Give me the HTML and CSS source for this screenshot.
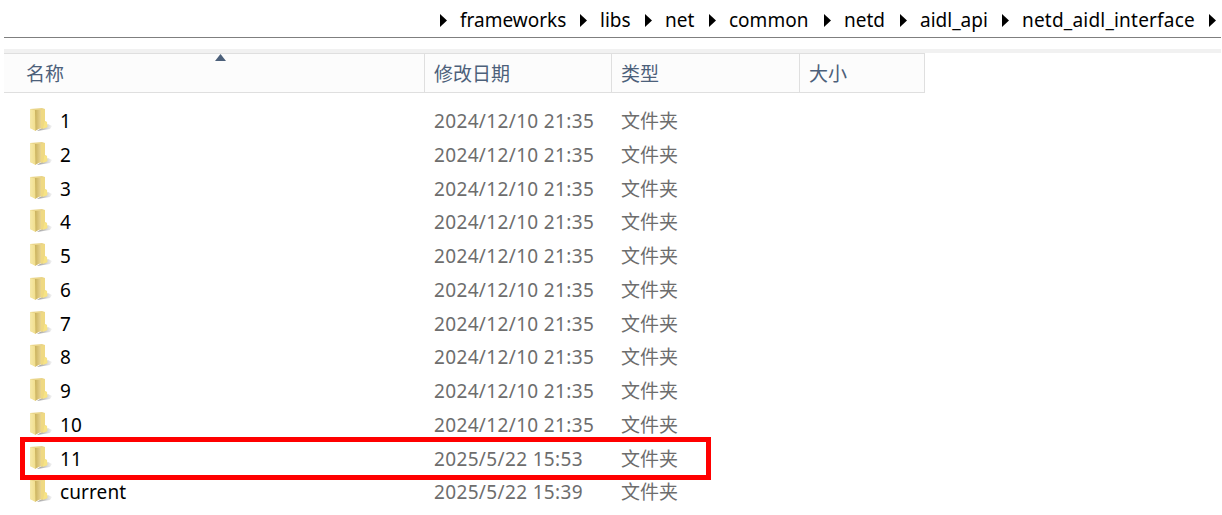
FILE: index.html
```html
<!DOCTYPE html>
<html lang="zh-CN">
<head>
    <meta charset="UTF-8">
    <title>netd_aidl_interface</title>
    <link rel="stylesheet" href="styles.css">
</head>
<body>

    <!-- Folder icon used by every row -->
    <svg class="defs" width="0" height="0">
        <defs>
            <linearGradient id="inside" x1="0" x2="1">
                <stop offset="0" stop-color="#c9b15c"/>
                <stop offset="1" stop-color="#efdb9b"/>
            </linearGradient>
            <linearGradient id="cover" x1="0" x2="1">
                <stop offset="0" stop-color="#f6e9aa"/>
                <stop offset="1" stop-color="#f1de8c"/>
            </linearGradient>
            <linearGradient id="shadow" x1="0" x2="1">
                <stop offset="0" stop-color="#999999"/>
                <stop offset="1" stop-color="#f4f4f4"/>
            </linearGradient>
            <symbol id="folder" viewBox="0 0 24 26">
                <path d="M14 20 L19 17 L23 19 L21 22 L8 24 Z" fill="url(#shadow)"/>
                <path d="M1 2 L13 1 L16 2 L16 20 L6 23 L1 21 Z" fill="#e9d489"/>
                <path d="M6 3 L13 3 L13 20 L6 24 Z" fill="url(#inside)"/>
                <path d="M12 3 L16 2 L16 14 L18 15 L18 20 L12 22 Z" fill="#efd983"/>
                <path d="M1 2 L6 3.5 L6.5 24 L1 21 Z" fill="url(#cover)"/>
                <path d="M15.5 14.5 L18 15 L18.5 20 L14 22 Z" fill="#f7e384"/>
            </symbol>
        </defs>
    </svg>

    <div class="path">
        <div class="crumb">frameworks</div>
        <div class="crumb">libs</div>
        <div class="crumb">net</div>
        <div class="crumb">common</div>
        <div class="crumb">netd</div>
        <div class="crumb">aidl_api</div>
        <div class="crumb current">netd_aidl_interface</div>
        <div class="crumb"></div>
    </div>
    <div class="band"></div>

    <div class="header">
        <div class="col sorted">名称</div>
        <div class="col">修改日期</div>
        <div class="col">类型</div>
        <div class="col">大小</div>
    </div>

    <div class="list" id="list"></div>

    <script>
        const oldDate = "2024/12/10 21:35";
        const files = [];
        for (let i = 1; i <= 10; i++) {
            files.push({ name: String(i), date: oldDate });
        }
        files.push({ name: "11", date: "2025/5/22 15:53", marked: true });
        files.push({ name: "current", date: "2025/5/22 15:39" });

        document.getElementById("list").innerHTML = files.map(file => `
            <div class="row${file.marked ? " marked" : ""}">
                <svg class="icon"><use href="#folder"/></svg>
                <span class="name">${file.name}</span>
                <span class="date">${file.date}</span>
                <span class="type">文件夹</span>
            </div>`).join("");
    </script>

</body>
</html>
```
FILE: styles.css
```css
*, *::before, *::after {
    box-sizing: border-box;
}
body {
    margin: 0;
    height: 515px;
    overflow: hidden;
    background: white;
    color: black;
    font-family: "Noto Sans", "Noto Sans CJK SC", sans-serif;
    font-size: 19px;
    white-space: nowrap;
}
.defs {
    position: absolute;
}
.path {
    display: grid;
    grid-template-columns: 140px 65px 64px 115px 76px 102px 207px 13px;
    height: 38px;
    margin: 0 1px 0 4px;
    padding-left: 436px;
    border-bottom: 1px solid #7f7f7f;
    line-height: 40px;
}
.crumb {
    display: flex;
}
.crumb::before {
    content: "";
    flex: none;
    width: 7px;
    height: 13px;
    margin: 14px 13px 0 0;
    background: black;
    clip-path: polygon(0 0, 100% 50%, 0 100%);
}
.current {
    letter-spacing: 0.2px;
}
.band {
    height: 4px;
    margin: 11px 1px 0 4px;
    background: #f1f1f1;
}
.header {
    display: grid;
    grid-template-columns: 421px 187px 188px 125px;
    width: 921px;
    height: 40px;
    margin-left: 4px;
    border-top: 1px solid #dfdfdf;
    border-bottom: 1px solid #dfdfdf;
    border-right: 1px solid #dfdfdf;
    background: #fcfcfc;
    color: #4c607a;
    line-height: 40px;
}
.col {
    height: 38px;
    padding-left: 9px;
    border-right: 1px solid #dfdfdf;
}
.col:last-child {
    border-right: none;
}
.sorted {
    position: relative;
    padding-left: 22px;
}
.sorted::after {
    content: "";
    position: absolute;
    left: 211px;
    top: 0;
    width: 11px;
    height: 7px;
    background: #4c607a;
    clip-path: polygon(50% 0, 100% 100%, 0 100%);
}
.list {
    padding: 12px 0 0 29px;
}
.row {
    position: relative;
    display: grid;
    grid-template-columns: 31px 374px 187px 100px;
    height: 33.75px;
    line-height: 33.75px;
}
.icon {
    width: 24px;
    height: 26px;
    margin-top: 2px;
}
.name {
    letter-spacing: 0.1px;
}
.date, .type {
    color: #6d6d6d;
}
.date {
    letter-spacing: 0.35px;
}
/* red frame over the row */
.marked {
    z-index: 1;
}
.marked::after {
    content: "";
    position: absolute;
    left: -9px;
    top: -5.5px;
    width: 691px;
    height: 43px;
    border: 5px solid red;
}
```
